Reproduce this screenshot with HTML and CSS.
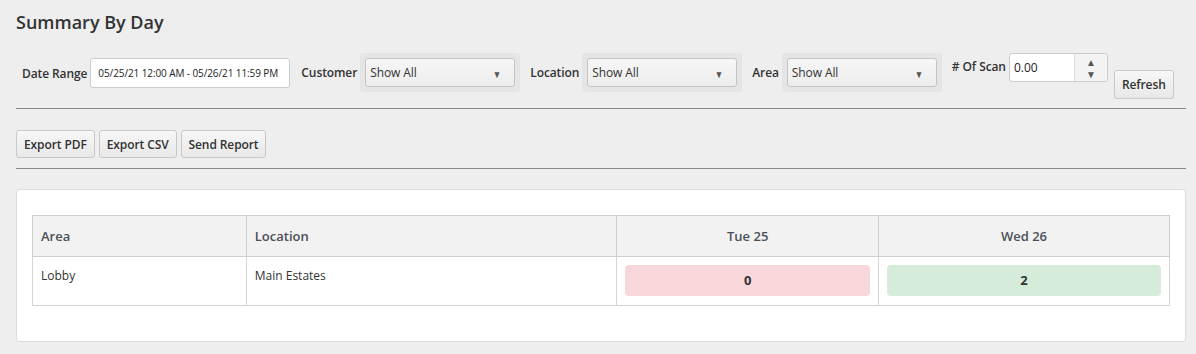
FILE: index.html
```html
<!DOCTYPE html>
<html lang="en">
<head>
    <meta charset="UTF-8">
    <meta name="viewport" content="width=device-width, initial-scale=1.0">
    <title>Summary By Day</title>
    <link rel="stylesheet" href="styles.css">
</head>
<body>
    <h2 class="page-title">Summary By Day</h2>

    <div class="filters">
        <div class="field field-date">
            <label>Date Range</label>
            <div class="date-input">05/25/21 12:00 AM - 05/26/21 11:59 PM</div>
        </div>
        <div class="field">
            <label>Customer</label>
            <div class="select-wrap">
                <div class="select"><span>Show All</span><span class="caret">&#9660;</span></div>
            </div>
        </div>
        <div class="field">
            <label>Location</label>
            <div class="select-wrap">
                <div class="select"><span>Show All</span><span class="caret">&#9660;</span></div>
            </div>
        </div>
        <div class="field">
            <label>Area</label>
            <div class="select-wrap">
                <div class="select"><span>Show All</span><span class="caret">&#9660;</span></div>
            </div>
        </div>
        <div class="field field-scan">
            <label># Of Scan</label>
            <div class="number-input">
                <span class="number-value">0.00</span>
                <span class="spinner"><span>&#9650;</span><span>&#9660;</span></span>
            </div>
        </div>
        <button class="btn btn-refresh">Refresh</button>
    </div>

    <hr class="divider">

    <div class="actions">
        <button class="btn">Export PDF</button>
        <button class="btn">Export CSV</button>
        <button class="btn">Send Report</button>
    </div>

    <hr class="divider">

    <div class="card">
        <table class="summary">
            <thead>
                <tr>
                    <th class="col-area">Area</th>
                    <th class="col-location">Location</th>
                    <th class="col-day">Tue 25</th>
                    <th class="col-day2">Wed 26</th>
                </tr>
            </thead>
            <tbody>
                <tr>
                    <td>Lobby</td>
                    <td>Main Estates</td>
                    <td><div class="count count-zero">0</div></td>
                    <td><div class="count count-ok">2</div></td>
                </tr>
            </tbody>
        </table>
    </div>
</body>
</html>
```

FILE: styles.css
```css
body {
    font-family: "Open Sans", Arial, sans-serif;
    background-color: #eeeeee;
    color: #333;
    margin: 0;
    padding: 0 10px 0 16px;
}
.page-title {
    font-size: 18px;
    font-weight: 600;
    color: #333;
    margin: 0;
    padding-top: 9px;
    line-height: 26px;
}
.filters {
    display: flex;
    align-items: flex-start;
    margin-top: 18px;
    padding-left: 6px;
    height: 47px;
}
.field {
    display: flex;
    align-items: center;
    margin-right: 10px;
}
.field label {
    font-size: 12px;
    font-weight: 600;
    color: #333;
    margin-right: 3px;
    letter-spacing: -0.1px;
}
.field-date {
    margin-top: 5px;
    margin-right: 11px;
}
.date-input {
    width: 200px;
    height: 30px;
    box-sizing: border-box;
    background: #fff;
    border: 1px solid #ccc;
    border-radius: 3px;
    font-size: 10px;
    line-height: 28px;
    padding-left: 7px;
    color: #222;
    letter-spacing: -0.1px;
}
.select-wrap {
    background: #e5e5e5;
    padding: 5px;
    border-radius: 4px;
}
.select {
    width: 150px;
    height: 29px;
    box-sizing: border-box;
    border: 1px solid #c4c4c4;
    border-radius: 3px;
    background: linear-gradient(#f7f7f7, #ececec);
    display: flex;
    align-items: center;
    justify-content: space-between;
    padding: 0 12px 0 4px;
    font-size: 12px;
    color: #333;
    letter-spacing: -0.1px;
}
.caret {
    font-size: 10px;
    color: #555;
    padding-top: 3px;
    transform: scaleX(0.85);
}
.field-scan {
    margin-right: 6px;
}
.field-scan label {
    margin-top: -2px;
}
.number-input {
    width: 99px;
    height: 29px;
    box-sizing: border-box;
    background: #fff;
    border: 1px solid #ccc;
    border-radius: 3px;
    display: flex;
}
.number-value {
    flex: 1;
    font-size: 12px;
    line-height: 27px;
    padding-left: 4px;
    color: #222;
}
.spinner {
    width: 32px;
    border-left: 1px solid #ddd;
    background: #f3f3f3;
    display: flex;
    flex-direction: column;
    align-items: center;
    justify-content: center;
    font-size: 10px;
    line-height: 12px;
    color: #555;
    border-radius: 0 3px 3px 0;
}
.btn {
    font-family: "Open Sans", Arial, sans-serif;
    font-size: 12px;
    font-weight: 600;
    color: #333;
    background: linear-gradient(#f7f7f7, #e8e8e8);
    border: 1px solid #c8c8c8;
    border-radius: 3px;
    height: 28px;
    padding: 0 7px;
    letter-spacing: -0.1px;
    cursor: pointer;
}
.btn-refresh {
    margin-top: 17px;
    height: 29px;
}
.divider {
    border: none;
    border-top: 1px solid #888;
    margin: 8px 0 0;
}
.actions {
    display: flex;
    gap: 4px;
    margin-top: 21px;
    margin-bottom: 10px;
}
.card {
    background: #fff;
    border: 1px solid #dcdcdc;
    border-radius: 4px;
    margin-top: 20px;
    padding: 25px 15px 35px;
}
.summary {
    width: 100%;
    border-collapse: collapse;
    font-size: 12px;
}
.summary th {
    background: #f2f2f2;
    border: 1px solid #cfcfcf;
    height: 40px;
    font-size: 13px;
    font-weight: 600;
    color: #4b5058;
    text-align: center;
    padding: 0 8px;
}
.summary th.col-area,
.summary th.col-location {
    text-align: left;
}
.col-area { width: 18.8%; }
.col-location { width: 32.6%; }
.col-day { width: 23%; }
.summary td {
    border: 1px solid #d6d6d6;
    padding: 8px 8px 9px;
    vertical-align: top;
    line-height: 21px;
    color: #333;
}
.count {
    height: 31px;
    border-radius: 4px;
    font-size: 13px;
    font-weight: 700;
    line-height: 31px;
    text-align: center;
    color: #333;
}
.count-zero {
    background: #f7d7da;
}
.count-ok {
    background: #d5ecdb;
}
```
